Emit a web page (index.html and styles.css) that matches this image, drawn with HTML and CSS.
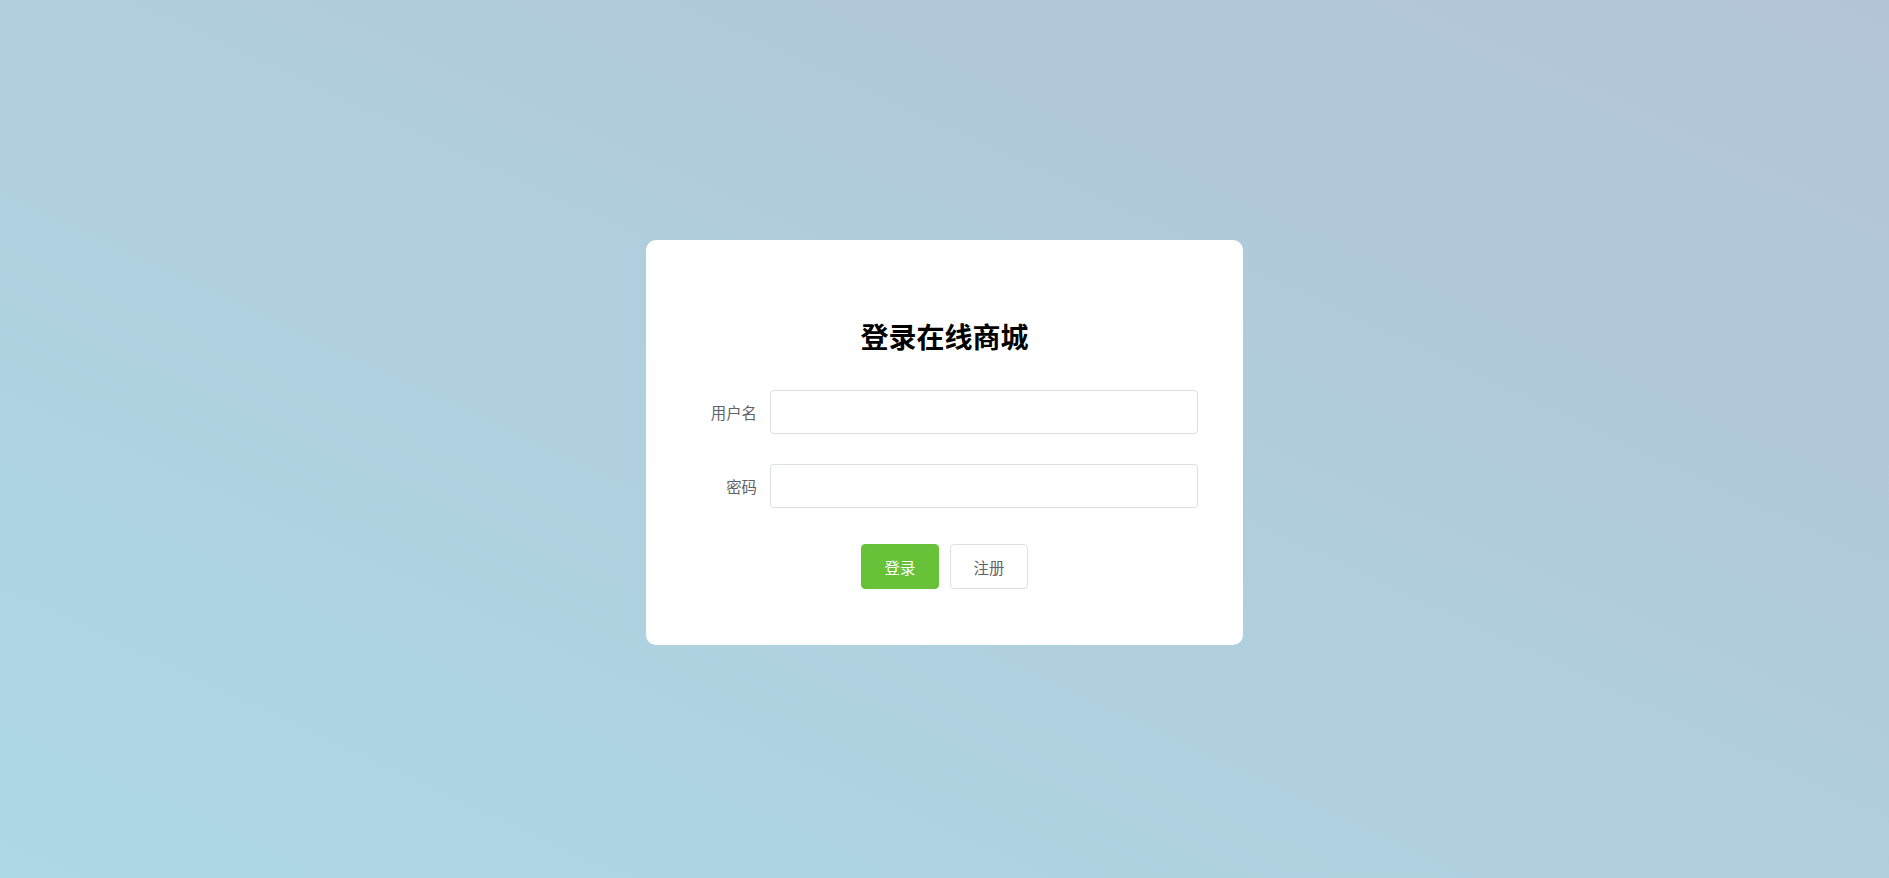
FILE: index.html
```html
<!DOCTYPE html>
<html lang="zh-CN">
<head>
<meta charset="utf-8">
<title>登录在线商城</title>
<link rel="stylesheet" href="styles.css">
</head>
<body>
<div class="page">
  <div class="card">
    <h2 class="title">登录在线商城</h2>
    <form class="form">
      <div class="row">
        <label class="label">用户名</label>
        <input class="input" type="text">
      </div>
      <div class="row">
        <label class="label">密码</label>
        <input class="input" type="password">
      </div>
      <div class="actions">
        <button type="button" class="btn btn-primary">登录</button>
        <button type="button" class="btn">注册</button>
      </div>
    </form>
  </div>
</div>
</body>
</html>
```

FILE: styles.css
```css
html, body {
  margin: 0;
  padding: 0;
  height: 100%;
}
body {
  background: linear-gradient(to top right, #add8e6, #b3c4d6);
  font-family: "Noto Sans CJK SC", "Noto Sans", "Liberation Sans", sans-serif;
}
.page {
  box-sizing: border-box;
  height: 100vh;
  padding-top: 7px;
  display: flex;
  align-items: center;
  justify-content: center;
}
.card {
  box-sizing: border-box;
  width: 597px;
  background: #fff;
  border-radius: 10px;
  padding: 75px 45px 56px 36px;
}
.title {
  margin: 0 0 33px 0;
  height: 42px;
  line-height: 42px;
  font-size: 28px;
  font-weight: 700;
  color: #000;
  text-align: center;
  padding-left: 9px;
}
.form {
  margin: 0;
}
.row {
  display: flex;
  align-items: center;
  height: 44px;
  margin-bottom: 30px;
}
.label {
  box-sizing: border-box;
  width: 88px;
  flex: none;
  padding-right: 13px;
  text-align: right;
  font-size: 15.4px;
  color: #606266;
}
.input {
  box-sizing: border-box;
  flex: 1;
  height: 44px;
  border: 1px solid #dcdfe6;
  border-radius: 4px;
  background: #fff;
  outline: none;
  padding: 0 15px;
  font-size: 15.4px;
}
.actions {
  display: flex;
  justify-content: center;
  gap: 11px;
  margin-top: 36px;
  padding-left: 9px;
}
.btn {
  box-sizing: border-box;
  width: 78px;
  height: 45px;
  padding: 0;
  border: 1px solid #dcdfe6;
  border-radius: 4px;
  background: #fff;
  color: #606266;
  font-family: inherit;
  font-size: 15.4px;
  cursor: pointer;
}
.btn-primary {
  background: #67c23a;
  border-color: #67c23a;
  color: #fff;
}
```
